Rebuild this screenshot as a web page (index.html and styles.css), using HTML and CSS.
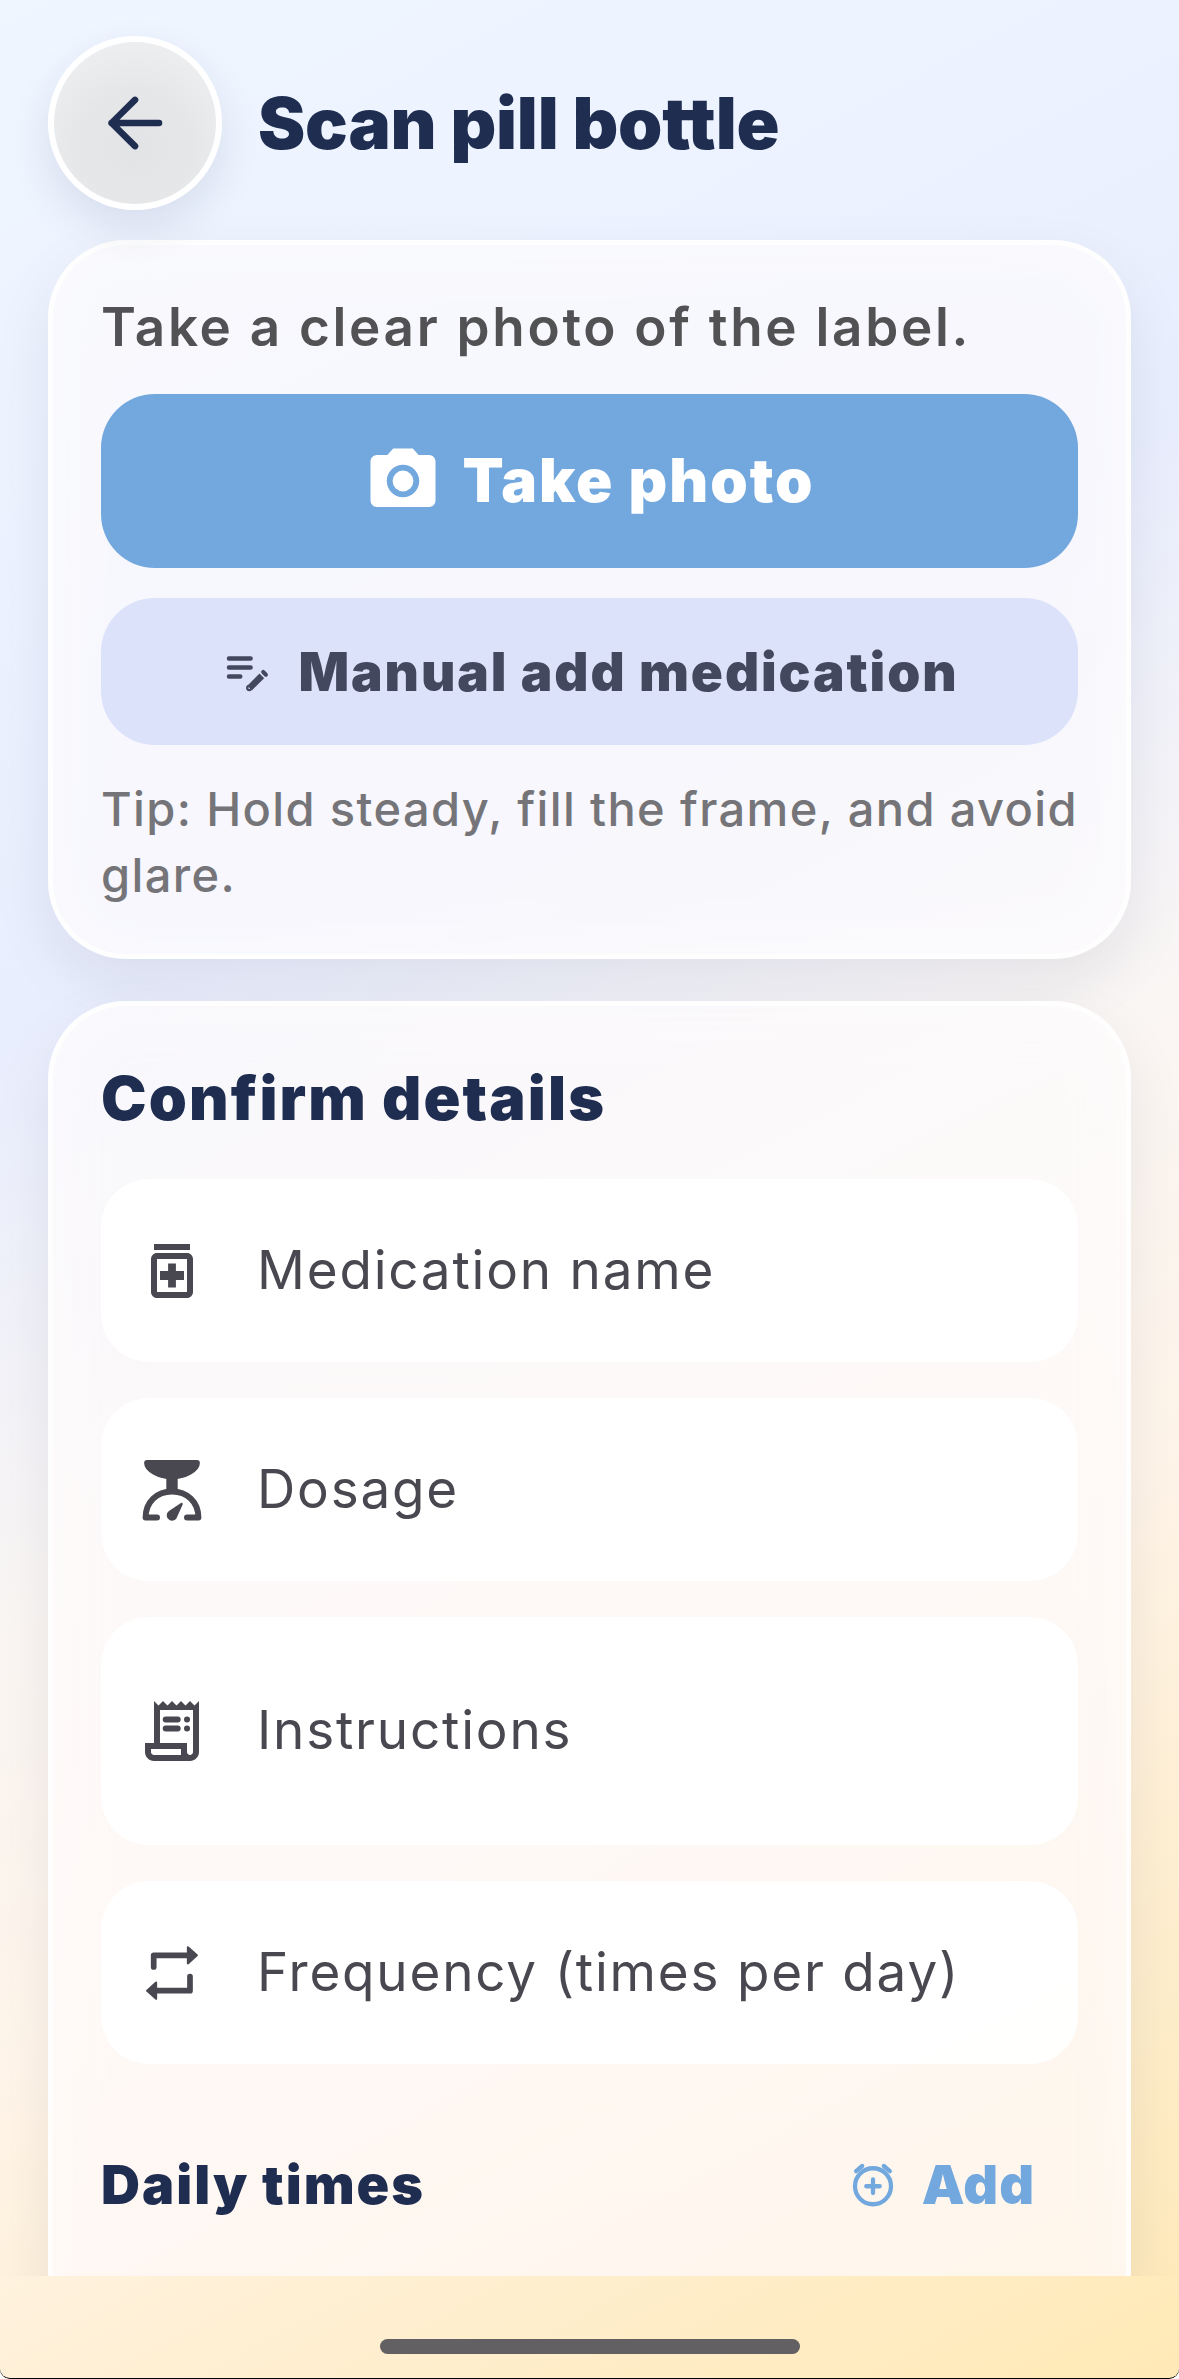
FILE: index.html
```
<!DOCTYPE html>
<html lang="en">
<head>
<meta charset="utf-8">
<title>Scan pill bottle</title>
<link rel="stylesheet" href="styles.css">
</head>
<body>
<div class="screen">
  <main class="viewport">
    <header class="header">
      <button class="back" aria-label="Back">
        <svg width="72" height="72" viewBox="0 0 24 24" fill="none" stroke="currentColor" stroke-width="2.200" stroke-linecap="round" stroke-linejoin="round"><path d="M20 12H4.200M12 4.300L4.200 12l7.800 7.700"/></svg>
      </button>
      <h1 class="title">Scan pill bottle</h1>
    </header>
    <section class="card capture">
      <p class="lead">Take a clear photo of the label.</p>
      <button class="btn primary">
        <svg width="78" height="78" viewBox="0 0 24 24" fill="currentColor"><circle cx="12" cy="12" r="3.200"/><path d="M9 2L7.170 4H4c-1.100 0-2 .9-2 2v12c0 1.100.9 2 2 2h16c1.100 0 2-.9 2-2V6c0-1.100-.9-2-2-2h-3.170L15 2H9zm3 15c-2.760 0-5-2.240-5-5s2.240-5 5-5 5 2.240 5 5-2.240 5-5 5z"/></svg>
        <span>Take photo</span>
      </button>
      <button class="btn secondary">
        <svg width="54" height="54" viewBox="0 0 24 24" fill="none" stroke="currentColor" stroke-width="2" stroke-linecap="round"><path d="M4 6h9.600M4 10h9.600M4 14h5"/><path d="M13.200 19.100l5.400-5.400" stroke-width="2.900" stroke-linecap="butt"/><circle cx="13" cy="19.100" r=".5" stroke-width="1.800"/><path d="M19.200 12l1.200 1.200" stroke-width="1.800"/></svg>
        <span>Manual add medication</span>
      </button>
      <p class="tip">Tip: Hold steady, fill the frame, and avoid glare.</p>
    </section>
    <section class="card details">
      <h2 class="heading">Confirm details</h2>
      <div class="field">
        <svg class="icon" width="72" height="72" viewBox="0 0 24 24" fill="currentColor"><path d="M6 3h12v2H6zM17 6H7c-1.100 0-2 .9-2 2v11c0 1.100.9 2 2 2h10c1.100 0 2-.9 2-2V8c0-1.100-.9-2-2-2zm0 13H7V8h10v11z"/><path d="M10.700 9.500h2.600V12H16v3h-2.700v2.500h-2.600V15H8v-3h2.700z"/></svg>
        <span>Medication name</span>
      </div>
      <div class="field">
        <svg class="icon" width="72" height="72" viewBox="0 0 24 24" fill="none" stroke="currentColor" stroke-width="2" stroke-linecap="round" stroke-linejoin="round"><path d="M3.700 3h16.600C20.300 5 16.500 7.400 12 7.400S3.700 5 3.700 3z" fill="currentColor"/><path d="M12 7v6" stroke-width="3.800" stroke-linecap="butt"/><path d="M7 21.200H3.200C3.200 16 7 12.500 12 12.500s8.800 3.500 8.800 8.700H17"/><path d="M15.200 16.700l-1.800 4a1.400 1.400 0 1 1-2.200-1.400z" fill="currentColor" stroke-width=".8"/></svg>
        <span>Dosage</span>
      </div>
      <div class="field tall">
        <svg class="icon" width="72" height="72" viewBox="0 0 24 24" fill="currentColor"><path d="M19.500 3.500L18 2l-1.500 1.500L15 2l-1.500 1.500L12 2l-1.500 1.500L9 2 7.500 3.500 6 2v14H3v3c0 1.660 1.340 3 3 3h12c1.660 0 3-1.340 3-3V2l-1.500 1.500zM15 20H6c-.55 0-1-.45-1-1v-1h10v2zm4-1c0 .55-.45 1-1 1s-1-.45-1-1v-3H8V5h11v14z"/><path d="M9.900 8.200h4M9.900 11.200h4M17 8.200h.01M17 11.200h.01" fill="none" stroke="currentColor" stroke-width="2" stroke-linecap="round"/></svg>
        <span>Instructions</span>
      </div>
      <div class="field">
        <svg class="icon" width="72" height="72" viewBox="0 0 24 24" fill="none" stroke="currentColor" stroke-width="1.900" stroke-linecap="round" stroke-linejoin="round"><path d="M5.900 10V6.100H17M18 13.200v4.700H7"/><path d="M17.300 3.400L20.300 6.100l-3 2.700zM6.700 15.200L3.700 17.900l3 2.700z" fill="currentColor" stroke-width=".7"/></svg>
        <span>Frequency (times per day)</span>
      </div>
      <div class="times">
        <h3 class="subheading">Daily times</h3>
        <button class="add">
          <svg width="54" height="54" viewBox="0 0 24 24" fill="none" stroke="currentColor" stroke-width="1.900" stroke-linecap="round"><circle cx="12" cy="13" r="8"/><path d="M12 10v6M9 13h6M4.500 6.300l2.700-2.300M19.500 6.300l-2.700-2.300"/></svg>
          <span>Add</span>
        </button>
      </div>
    </section>
  </main>
  <footer class="home"><div class="indicator"></div></footer>
</div>
</body>
</html>
```
FILE: styles.css
```
* { box-sizing: border-box; }
body { margin: 0; background: #fff; }
h1, h2, h3, p { margin: 0; }
button { border: 0; background: none; padding: 0; font: inherit; color: inherit; }
svg { display: block; flex: none; }

.screen {
  width: 1179px;
  height: 2379px;
  display: flex;
  flex-direction: column;
  overflow: hidden;
  border-bottom: 1px solid #000;
  border-radius: 0 0 10px 10px;
  font-family: Inter, "Liberation Sans", sans-serif;
  background: linear-gradient(152deg, #eff6ff 0%, #ecf2ff 20%, #e9eefe 35%, #faf6f4 54%, #fff5ea 69%, #fff0d5 81%, #ffe9b6 100%);
}
.viewport { height: 2276px; flex: none; overflow: hidden; padding: 36px 48px 0; }

.header { display: flex; align-items: center; gap: 36px; height: 174px; margin-bottom: 30px; }
.back {
  width: 174px;
  height: 174px;
  border-radius: 50%;
  border: 6px solid #fff;
  display: flex;
  align-items: center;
  justify-content: center;
  color: #1f2d50;
  background: radial-gradient(circle at 50% 65%, #e2e3e5 0%, #e6e7e9 45%, #f1f2f4 100%);
  box-shadow: 0 18px 42px rgba(40, 50, 90, .11);
}
.title { font-size: 71px; line-height: 84px; font-weight: 900; letter-spacing: -.2px; color: #1f2d50; white-space: nowrap; }

.card {
  border: 5px solid rgba(255, 255, 255, .85);
  border-radius: 78px;
  padding: 0 48px;
  background: rgba(251, 250, 252, .75);
  box-shadow: 0 24px 60px rgba(30, 30, 50, .08), inset 0 0 60px rgba(255, 255, 255, .5);
}
.capture { height: 719px; padding-top: 49px; margin-bottom: 42px; }
.lead { font-size: 53px; line-height: 66px; font-weight: 600; letter-spacing: 2.700px; color: #525254; white-space: nowrap; margin-bottom: 34px; }
.btn { width: 100%; display: flex; align-items: center; justify-content: center; border-radius: 54px; white-space: nowrap; }
.primary { height: 174px; gap: 20px; margin-bottom: 30px; background: #72a8de; color: #fff; font-size: 60px; font-weight: 900; letter-spacing: 2px; }
.secondary { height: 147px; gap: 24px; margin-bottom: 31px; background: #dde2fb; color: #43485f; font-size: 53px; font-weight: 900; letter-spacing: 1.900px; }
.primary span { margin-bottom: 3px; }
.tip { font-size: 47px; line-height: 66px; font-weight: 500; letter-spacing: 1.370px; color: #757579; }

.details { height: 1500px; padding-top: 56px; background: linear-gradient(rgba(252, 250, 251, .76), rgba(255, 249, 249, .76)); }
.heading { font-size: 61px; line-height: 72px; font-weight: 900; letter-spacing: 2.100px; color: #1f2d50; margin-bottom: 45px; }
.field {
  height: 183px;
  margin-bottom: 36px;
  padding-left: 36px;
  border-radius: 48px;
  background: rgba(255, 255, 255, .94);
  display: flex;
  align-items: center;
  gap: 48px;
  color: #494850;
  font-size: 53px;
  letter-spacing: 1.800px;
  white-space: nowrap;
}
.icon { margin-left: -1px; margin-right: 1px; }
.field span { margin-bottom: 2px; }
.tall { height: 228px; }
.times { display: flex; align-items: center; justify-content: space-between; height: 144px; margin-top: 48px; padding-right: 43px; }
.subheading { font-size: 54px; font-weight: 900; letter-spacing: 2px; color: #1f2d50; }
.add { display: flex; align-items: center; gap: 22px; color: #72a8de; font-size: 54px; font-weight: 900; letter-spacing: 1px; }

.home { height: 102px; display: flex; justify-content: center; align-items: flex-start; padding-top: 63px; }
.indicator { width: 420px; height: 15px; border-radius: 8px; background: #626062; }
```
